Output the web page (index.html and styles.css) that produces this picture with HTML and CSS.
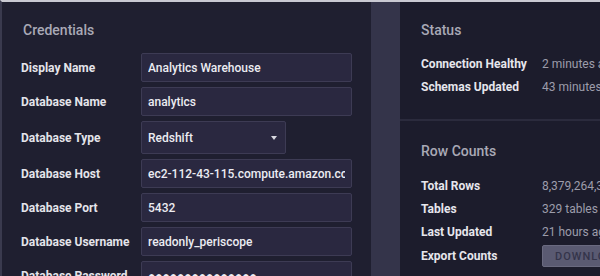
FILE: index.html
```html
<!DOCTYPE html>
<html lang="en">
<head>
    <meta charset="UTF-8">
    <title>Connection Settings</title>
    <link rel="stylesheet" href="styles.css">
</head>
<body>
    <div class="frame">
        <div class="credentials">
            <h2>Credentials</h2>
            <div class="form-group">
                <label>Display Name</label>
                <input type="text" value="Analytics Warehouse">
            </div>
            <div class="form-group">
                <label>Database Name</label>
                <input type="text" value="analytics">
            </div>
            <div class="form-group">
                <label>Database Type</label>
                <div class="select">Redshift <span class="caret"></span></div>
            </div>
            <div class="form-group">
                <label>Database Host</label>
                <input type="text" value="ec2-112-43-115.compute.amazon.com">
            </div>
            <div class="form-group">
                <label>Database Port</label>
                <input type="text" value="5432">
            </div>
            <div class="form-group">
                <label>Database Username</label>
                <input type="text" value="readonly_periscope">
            </div>
            <div class="form-group">
                <label>Database Password</label>
                <input type="text" value="&#9679;&#9679;&#9679;&#9679;&#9679;&#9679;&#9679;&#9679;&#9679;&#9679;&#9679;&#9679;&#9679;&#9679;&#9679;">
            </div>
        </div>

        <div class="gutter"></div>

        <div class="side">
            <div class="section status">
                <h2>Status</h2>
                <div class="stat"><span class="stat-label">Connection Healthy</span><span class="stat-value">2 minutes ago</span></div>
                <div class="stat"><span class="stat-label">Schemas Updated</span><span class="stat-value">43 minutes ago</span></div>
            </div>
            <div class="section counts">
                <h2>Row Counts</h2>
                <div class="stat"><span class="stat-label">Total Rows</span><span class="stat-value">8,379,264,312</span></div>
                <div class="stat"><span class="stat-label">Tables</span><span class="stat-value">329 tables</span></div>
                <div class="stat"><span class="stat-label">Last Updated</span><span class="stat-value">21 hours ago</span></div>
                <div class="stat export"><span class="stat-label">Export Counts</span><button class="btn">DOWNLOAD CSV</button></div>
            </div>
        </div>
    </div>
</body>
</html>
```

FILE: styles.css
```css
* {
    box-sizing: border-box;
    margin: 0;
    padding: 0;
    font-family: Roboto, 'Liberation Sans', sans-serif;
}

body {
    background-color: #1d1d2d;
    width: 600px;
    height: 276px;
    overflow: hidden;
}

.frame {
    display: flex;
    height: 276px;
    overflow: hidden;
    border-top: 2px solid #c9c9d2;
    border-left: 2px solid #3a3a4e;
}

h2 {
    font-size: 14px;
    font-weight: 500;
    color: #a9a9b6;
    height: 18px;
    line-height: 18px;
}

.credentials {
    flex: 0 0 369px;
    background-color: #1f1f30;
    padding: 19px 0 0 19px;
    display: flex;
    flex-direction: column;
    gap: 5px;
}

.credentials h2 {
    margin-left: 2px;
    margin-bottom: 9px;
}

.form-group {
    display: flex;
    align-items: center;
    flex-shrink: 0;
}

.form-group label {
    width: 120px;
    flex-shrink: 0;
    font-size: 12px;
    font-weight: 700;
    color: #e4e4ea;
    white-space: nowrap;
}

.form-group input,
.select {
    width: 211px;
    height: 29px;
    flex-shrink: 0;
    padding: 0 6px;
    background-color: #2a2840;
    border: 1px solid #3d3b54;
    border-radius: 2px;
    color: #ececf2;
    font-size: 12px;
    font-weight: 500;
    outline: none;
}

.select {
    width: 145px;
    height: 33px;
    display: flex;
    align-items: center;
    justify-content: space-between;
    padding-right: 8px;
}

.caret {
    width: 0;
    height: 0;
    border-left: 3px solid transparent;
    border-right: 3px solid transparent;
    border-top: 4px solid #d8d8e0;
}

.gutter {
    flex: 0 0 29px;
    background-color: #34344a;
}

.side {
    flex: 1;
    min-width: 0;
    overflow: hidden;
    background-color: #1c1c2c;
    display: flex;
    flex-direction: column;
}

.section {
    padding-left: 21px;
}

.status {
    padding-top: 19px;
    height: 119px;
    border-bottom: 2px solid #2b2b3d;
}

.status h2 {
    margin-bottom: 13px;
}

.counts {
    padding-top: 21px;
}

.counts h2 {
    margin-bottom: 14px;
}

.stat {
    display: flex;
    align-items: center;
    height: 23px;
    white-space: nowrap;
}

.stat-label {
    width: 121px;
    flex-shrink: 0;
    font-size: 12px;
    font-weight: 700;
    color: #e6e6ec;
}

.stat-value {
    font-size: 12px;
    color: #9d9dab;
}

.export {
    height: 24px;
    margin-top: 1px;
}

.btn {
    flex-shrink: 0;
    height: 22px;
    padding: 0 12px;
    border: 1px solid #6a6a80;
    border-radius: 2px;
    background-color: #5a5a72;
    color: #34344a;
    font-size: 11px;
    font-weight: 500;
    letter-spacing: 1px;
}
```
